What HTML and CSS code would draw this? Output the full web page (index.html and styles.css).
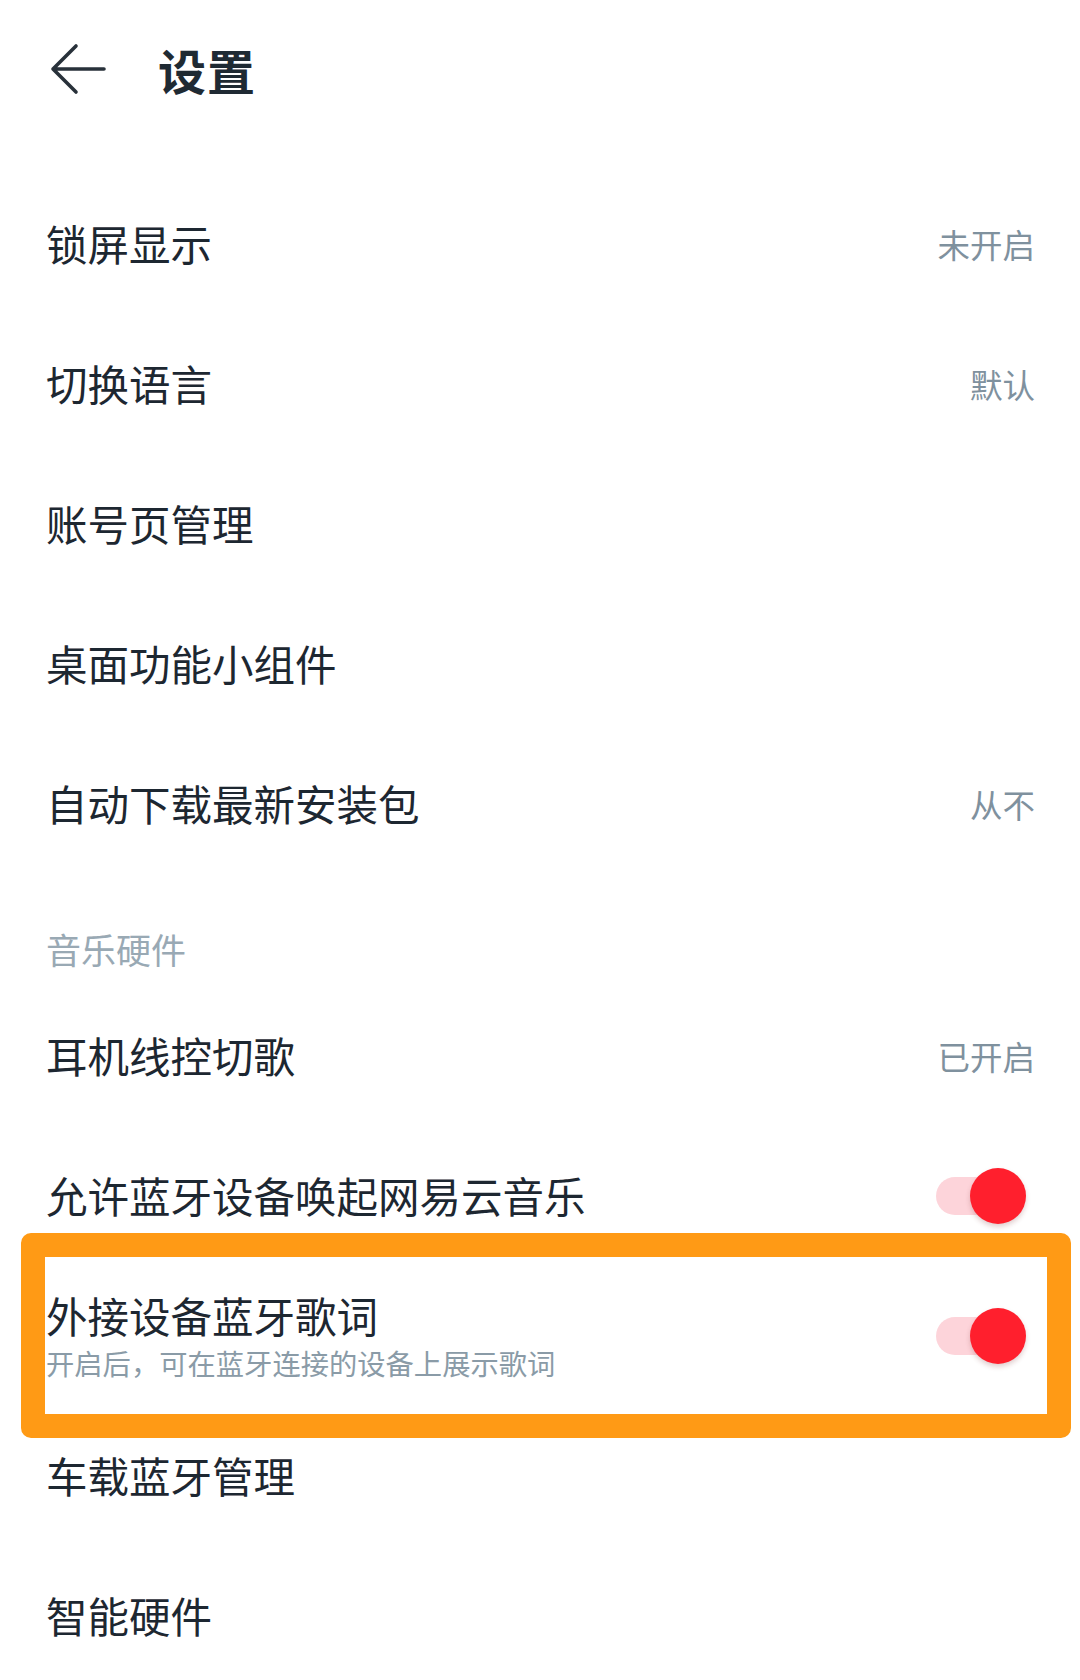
FILE: index.html
```html
<!DOCTYPE html>
<html lang="zh-CN">
<head>
<meta charset="utf-8">
<title>设置</title>
<link rel="stylesheet" href="styles.css">
</head>
<body>
<div class="page">
  <header class="topbar">
    <svg class="back" width="58" height="52" viewBox="0 0 58 52" aria-hidden="true">
      <path d="M55 26 H4 M27 3 L4 26 L27 49" fill="none" stroke="#28313a" stroke-width="3.6" stroke-linecap="round" stroke-linejoin="round"/>
    </svg>
    <h1 class="title">设置</h1>
  </header>

  <main class="list">
    <div class="row"><span class="label">锁屏显示</span><span class="value">未开启</span></div>
    <div class="row"><span class="label">切换语言</span><span class="value">默认</span></div>
    <div class="row"><span class="label">账号页管理</span></div>
    <div class="row"><span class="label">桌面功能小组件</span></div>
    <div class="row"><span class="label">自动下载最新安装包</span><span class="value">从不</span></div>

    <div class="section">音乐硬件</div>

    <div class="row"><span class="label">耳机线控切歌</span><span class="value">已开启</span></div>
    <div class="row"><span class="label">允许蓝牙设备唤起网易云音乐</span><span class="toggle on"><span class="knob"></span></span></div>
    <div class="row highlighted">
      <div class="texts">
        <span class="label tight">外接设备蓝牙歌词</span>
        <span class="sub">开启后，可在蓝牙连接的设备上展示歌词</span>
      </div>
      <span class="toggle on"><span class="knob"></span></span>
      <span class="mark"></span>
    </div>
    <div class="row"><span class="label">车载蓝牙管理</span></div>
    <div class="row"><span class="label">智能硬件</span></div>
  </main>
</div>
</body>
</html>
```

FILE: styles.css
```css
* { box-sizing: border-box; }
html, body {
  margin: 0;
  padding: 0;
  background: #ffffff;
}
body {
  font-family: "Noto Sans CJK SC", "Noto Sans", sans-serif;
  color: #1d2731;
}
.page {
  width: 1080px;
  min-height: 1680px;
  overflow: hidden;
}
.topbar {
  height: 140px;
  display: flex;
  align-items: center;
  padding-left: 49px;
  padding-bottom: 2px;
}
.back {
  display: block;
  flex: none;
}
.title {
  margin: 0 0 0 51px;
  font-size: 48px;
  font-weight: 700;
  line-height: 1;
  color: #1f2a33;
  letter-spacing: 1px;
}
.list {
  padding-top: 34px;
}
.row {
  position: relative;
  height: 140px;
  display: flex;
  align-items: center;
  justify-content: space-between;
  padding: 0 48px 0 46px;
}
.label {
  font-size: 41.5px;
  line-height: 1.2;
  color: #1d2731;
  white-space: nowrap;
}
.label.tight {
  line-height: 46px;
}
.value {
  font-size: 32.5px;
  color: #7f919e;
  line-height: 1;
  margin-right: -3px;
}
.section {
  height: 112px;
  padding: 55px 0 0 46px;
  font-size: 35px;
  line-height: 40px;
  color: #99a9b4;
}
.texts {
  display: flex;
  flex-direction: column;
}
.sub {
  font-size: 28.3px;
  line-height: 34px;
  margin-top: 8px;
  color: #8a9ba7;
  white-space: nowrap;
}
.toggle {
  position: relative;
  width: 84px;
  height: 38px;
  border-radius: 19px;
  background: #fdd4da;
  margin-right: 12px;
  flex: none;
}
.knob {
  position: absolute;
  right: -6px;
  top: -9px;
  width: 56px;
  height: 56px;
  border-radius: 50%;
  background: #ff1f2d;
  box-shadow: 0 3px 5px rgba(120, 40, 40, 0.22);
}
.mark {
  position: absolute;
  left: 21px;
  right: 9px;
  top: -33px;
  bottom: -32px;
  border: 24px solid #ff9a15;
  border-radius: 10px;
  pointer-events: none;
}
```
